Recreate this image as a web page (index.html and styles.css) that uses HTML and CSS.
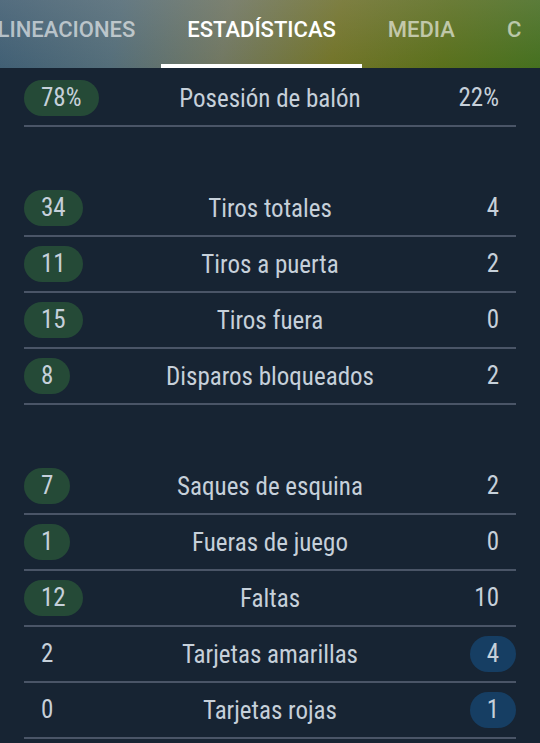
FILE: index.html
```html
<!DOCTYPE html>
<html lang="es">

<head>
  <meta charset="UTF-8">
  <title>Estadísticas</title>
  <link rel="stylesheet" href="styles.css">
</head>

<body>
  <div class="tabs">
    <div class="tab-viewport">
      <div class="tab-strip">
        <div class="tab">Alineaciones</div>
        <div class="tab active">Estadísticas</div>
        <div class="tab">Media</div>
        <div class="tab">Comentarios</div>
      </div>
    </div>
  </div>

  <div class="stats">
    <div class="group">
      <div class="row">
        <div class="home"><span class="val win-home">78%</span></div>
        <div class="label">Posesión de balón</div>
        <div class="away"><span class="val">22%</span></div>
      </div>
    </div>

    <div class="group">
      <div class="row">
        <div class="home"><span class="val win-home">34</span></div>
        <div class="label">Tiros totales</div>
        <div class="away"><span class="val">4</span></div>
      </div>
      <div class="row">
        <div class="home"><span class="val win-home">11</span></div>
        <div class="label">Tiros a puerta</div>
        <div class="away"><span class="val">2</span></div>
      </div>
      <div class="row">
        <div class="home"><span class="val win-home">15</span></div>
        <div class="label">Tiros fuera</div>
        <div class="away"><span class="val">0</span></div>
      </div>
      <div class="row">
        <div class="home"><span class="val win-home">8</span></div>
        <div class="label">Disparos bloqueados</div>
        <div class="away"><span class="val">2</span></div>
      </div>
    </div>

    <div class="group">
      <div class="row">
        <div class="home"><span class="val win-home">7</span></div>
        <div class="label">Saques de esquina</div>
        <div class="away"><span class="val">2</span></div>
      </div>
      <div class="row">
        <div class="home"><span class="val win-home">1</span></div>
        <div class="label">Fueras de juego</div>
        <div class="away"><span class="val">0</span></div>
      </div>
      <div class="row">
        <div class="home"><span class="val win-home">12</span></div>
        <div class="label">Faltas</div>
        <div class="away"><span class="val">10</span></div>
      </div>
      <div class="row">
        <div class="home"><span class="val">2</span></div>
        <div class="label">Tarjetas amarillas</div>
        <div class="away"><span class="val win-away">4</span></div>
      </div>
      <div class="row">
        <div class="home"><span class="val">0</span></div>
        <div class="label">Tarjetas rojas</div>
        <div class="away"><span class="val win-away">1</span></div>
      </div>
    </div>
  </div>
</body>

</html>
```

FILE: styles.css
```css
* {
  box-sizing: border-box;
}

body {
  margin: 0;
  background: #172433;
  font-family: "Roboto Condensed", Roboto, "Liberation Sans", sans-serif;
  font-stretch: condensed;
  color: #c6d0da;
  overflow: hidden;
}

/* tab bar */
.tabs {
  height: 68px;
  overflow: hidden;
  background:
    linear-gradient(180deg, rgba(130, 130, 130, 0.25), rgba(0, 0, 0, 0.08)),
    linear-gradient(100deg, #44667e 0%, #5b7784 22%, #7a8169 42%, #7c7e2c 62%, #627a1e 82%, #4b7a22 100%);
}

/* strip is scrolled, last tab only peeks in */
.tab-viewport {
  width: 521px;
  height: 100%;
  overflow: hidden;
}

.tab-strip {
  display: flex;
  margin-left: -43px;
  height: 100%;
}

.tab {
  flex: none;
  padding: 0 26px;
  font-family: Roboto, "Liberation Sans", sans-serif;
  font-stretch: normal;
  font-weight: 500;
  font-size: 22px;
  text-transform: uppercase;
  line-height: 60px;
  color: rgba(255, 255, 255, 0.6);
  border-bottom: 4px solid transparent;
}

.tab.active {
  color: #fff;
  border-bottom-color: #fff;
}

/* stats */
.stats {
  padding: 3px 24px 0;
}

.group + .group {
  margin-top: 54px;
}

.row {
  display: grid;
  grid-template-columns: 1fr auto 1fr;
  align-items: center;
  height: 56px;
  border-bottom: 2px solid #4a5567;
  font-size: 25px;
}

.label {
  text-align: center;
}

.away {
  text-align: right;
}

.val {
  display: inline-block;
  height: 36px;
  line-height: 36px;
  padding: 0 17px;
  border-radius: 18px;
}

.win-home {
  background: #254a37;
}

.win-away {
  background: #163e63;
}
```
